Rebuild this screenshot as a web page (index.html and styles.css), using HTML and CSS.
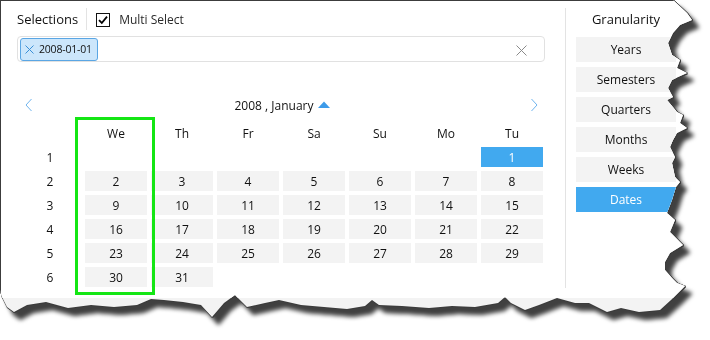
FILE: index.html
```html
<!DOCTYPE html>
<html lang="en">
<head>
    <meta charset="UTF-8">
    <meta name="viewport" content="width=device-width, initial-scale=1.0">
    <title>Date Filter</title>
    <link rel="stylesheet" href="styles.css">
</head>
<body>
    <div class="sheet">
        <div class="paper">
            <div class="app">
                <section class="selections">
                    <div class="sel-head">
                        <span class="title">Selections</span>
                        <span class="vsep"></span>
                        <label class="multi">
                            <span class="check">
                                <svg width="12" height="12" viewBox="0 0 12 12"><path d="M2 6.2 L4.8 9 L10 2.6" fill="none" stroke="#000" stroke-width="1.8"/></svg>
                            </span>
                            Multi Select
                        </label>
                    </div>

                    <div class="tagbox">
                        <span class="chip">
                            <svg width="9" height="9" viewBox="0 0 9 9"><path d="M0.5 0.5 L8.5 8.5 M8.5 0.5 L0.5 8.5" stroke="#3a8fd6" stroke-width="1"/></svg>
                            2008-01-01
                        </span>
                        <svg class="clear" width="11" height="11" viewBox="0 0 11 11"><path d="M0.5 0.5 L10.5 10.5 M10.5 0.5 L0.5 10.5" stroke="#8a8a8a" stroke-width="1"/></svg>
                    </div>

                    <div class="nav">
                        <svg width="8" height="14" viewBox="0 0 8 14"><path d="M6.5 1 L1 7 L6.5 13" fill="none" stroke="#6fb4ee" stroke-width="1"/></svg>
                        <span class="period">2008 , January
                            <svg width="12" height="7" viewBox="0 0 12 7"><path d="M0 7 L6 0.5 L12 7 Z" fill="#3d9be9"/></svg>
                        </span>
                        <svg width="8" height="14" viewBox="0 0 8 14"><path d="M1.5 1 L7 7 L1.5 13" fill="none" stroke="#6fb4ee" stroke-width="1"/></svg>
                    </div>

                    <div class="calendar" id="calendar">
                        <div class="highlight"></div>
                    </div>
                </section>

                <div class="divider"></div>

                <aside class="granularity">
                    <div class="gran-title">Granularity</div>
                    <div class="gran-btn">Years</div>
                    <div class="gran-btn">Semesters</div>
                    <div class="gran-btn">Quarters</div>
                    <div class="gran-btn">Months</div>
                    <div class="gran-btn">Weeks</div>
                    <div class="gran-btn active">Dates</div>
                </aside>
            </div>
        </div>
    </div>

    <script>
        // January 2008, weeks start on Wednesday
        const days = ['We', 'Th', 'Fr', 'Sa', 'Su', 'Mo', 'Tu'];
        const cal = document.getElementById('calendar');
        let html = '<span class="wk"></span>';
        days.forEach(d => { html += `<span class="head">${d}</span>`; });

        // Jan 1 2008 falls on a Tuesday: the last column of week 1
        for (let w = 1; w <= 6; w++) {
            html += `<span class="wk">${w}</span>`;
            for (let c = 0; c < 7; c++) {
                const idx = (w - 1) * 7 + c - 5;
                if (idx >= 1 && idx <= 31) {
                    html += `<span class="day${idx === 1 ? ' selected' : ''}">${idx}</span>`;
                } else {
                    html += '<span></span>';
                }
            }
        }
        cal.insertAdjacentHTML('beforeend', html);
    </script>
</body>
</html>
```

FILE: styles.css
```css
* {
    margin: 0;
    padding: 0;
    box-sizing: border-box;
}

body {
    background: #fff;
    font-family: "Open Sans", "Noto Sans", sans-serif;
    font-size: 12px;
    color: #111;
    width: 710px;
    height: 340px;
    overflow: hidden;
}

/* torn paper look */
.sheet {
    width: 710px;
    height: 340px;
    filter: drop-shadow(1px 0 0 #3c3c3c) drop-shadow(0 1px 0 #3c3c3c) drop-shadow(6px 7px 2px rgba(0, 0, 0, 0.75));
}

.paper {
    width: 710px;
    height: 340px;
    background: #f3f3f3;
    border-top: 1px solid #3c3c3c;
    border-left: 1px solid #3c3c3c;
    clip-path: polygon(0 0, 673px 0, 687px 13px, 692px 20px, 680px 25px, 673px 33px, 668px 43px, 672px 55px, 680px 60px, 677px 68px, 687px 73px, 678px 77px, 672px 80px, 668px 88px, 673px 97px, 667px 100px, 677px 112px, 683px 115px, 680px 123px, 687px 128px, 677px 133px, 673px 140px, 670px 147px, 675px 157px, 672px 163px, 675px 177px, 680px 182px, 676px 187px, 672px 200px, 667px 213px, 675px 220px, 670px 232px, 678px 240px, 683px 245px, 670px 253px, 665px 262px, 665px 270px, 672px 278px, 677px 283px, 685px 286px, 671px 300px, 660px 310px, 639px 312px, 621px 308px, 607px 312px, 589px 303px, 575px 303px, 557px 298px, 539px 305px, 525px 310px, 511px 303px, 505px 297px, 498px 303px, 475px 307px, 452px 306px, 429px 308px, 402px 306px, 379px 305px, 372px 300px, 365px 306px, 347px 309px, 324px 307px, 301px 305px, 279px 300px, 265px 303px, 247px 307px, 235px 295px, 224px 303px, 212px 317px, 201px 305px, 183px 302px, 164px 300px, 151px 299px, 137px 305px, 114px 307px, 91px 305px, 68px 308px, 46px 302px, 27px 305px, 14px 312px, 7px 307px, 2px 297px, 0 290px);
}

.app {
    display: flex;
    height: 297px;
    background: #fff;
}

/* left panel */
.selections {
    width: 564px;
    padding-left: 16px;
}

.sel-head {
    display: flex;
    align-items: center;
    height: 22px;
    margin-top: 7px;
}

.title {
    font-size: 13px;
}

.vsep {
    width: 1px;
    height: 22px;
    background: #e3e3e3;
    margin: 0 9px 0 8px;
}

.multi {
    display: flex;
    align-items: center;
    gap: 9px;
    font-size: 12px;
    color: #2a2a2a;
}

.check {
    width: 14px;
    height: 14px;
    border: 1px solid #111;
    display: flex;
    align-items: center;
    justify-content: center;
    margin-top: 2px;
}

.tagbox {
    width: 528px;
    height: 26px;
    margin-top: 6px;
    border: 1px solid #e1e1e1;
    border-radius: 4px;
    padding: 1px 2px;
    display: flex;
    align-items: center;
}

.chip {
    height: 23px;
    display: flex;
    align-items: center;
    gap: 5px;
    padding: 0 5px 0 4px;
    background: #cce6fb;
    border: 1px solid #5aa6e4;
    border-radius: 3px;
    font-size: 10.5px;
    letter-spacing: -0.2px;
    color: #111;
}

.clear {
    margin-left: auto;
    margin-right: 15px;
    margin-top: 2px;
}

.nav {
    display: flex;
    align-items: center;
    justify-content: space-between;
    width: 528px;
    height: 20px;
    margin-top: 33px;
    padding: 0 7px 0 8px;
}

.period {
    display: flex;
    align-items: center;
    gap: 5px;
    margin-left: 2px;
}

.period svg {
    margin-top: -2px;
}

/* calendar grid */
.calendar {
    position: relative;
    display: grid;
    grid-template-columns: repeat(8, 62px);
    grid-auto-rows: 20px;
    gap: 4px;
    margin: 8px 0 0 2px;
}

.calendar span {
    display: flex;
    align-items: center;
    justify-content: center;
}

.day {
    background: #f3f3f3;
}

.day.selected {
    background: #41a9ef;
    color: #fff;
}

.highlight {
    position: absolute;
    left: 56px;
    top: -6px;
    width: 80px;
    height: 178px;
    border: 3px solid #14e614;
}

/* right panel */
.divider {
    width: 1px;
    height: 280px;
    margin-top: 7px;
    background: #e3e3e3;
}

.granularity {
    padding: 7px 0 0 10px;
}

.gran-title {
    width: 100px;
    height: 22px;
    line-height: 22px;
    text-align: center;
    font-size: 13px;
    margin-bottom: 7px;
}

.gran-btn {
    width: 100px;
    height: 25px;
    line-height: 25px;
    text-align: center;
    background: #f3f3f3;
    margin-bottom: 5px;
}

.gran-btn.active {
    background: #41a9ef;
    color: #fff;
}
```
